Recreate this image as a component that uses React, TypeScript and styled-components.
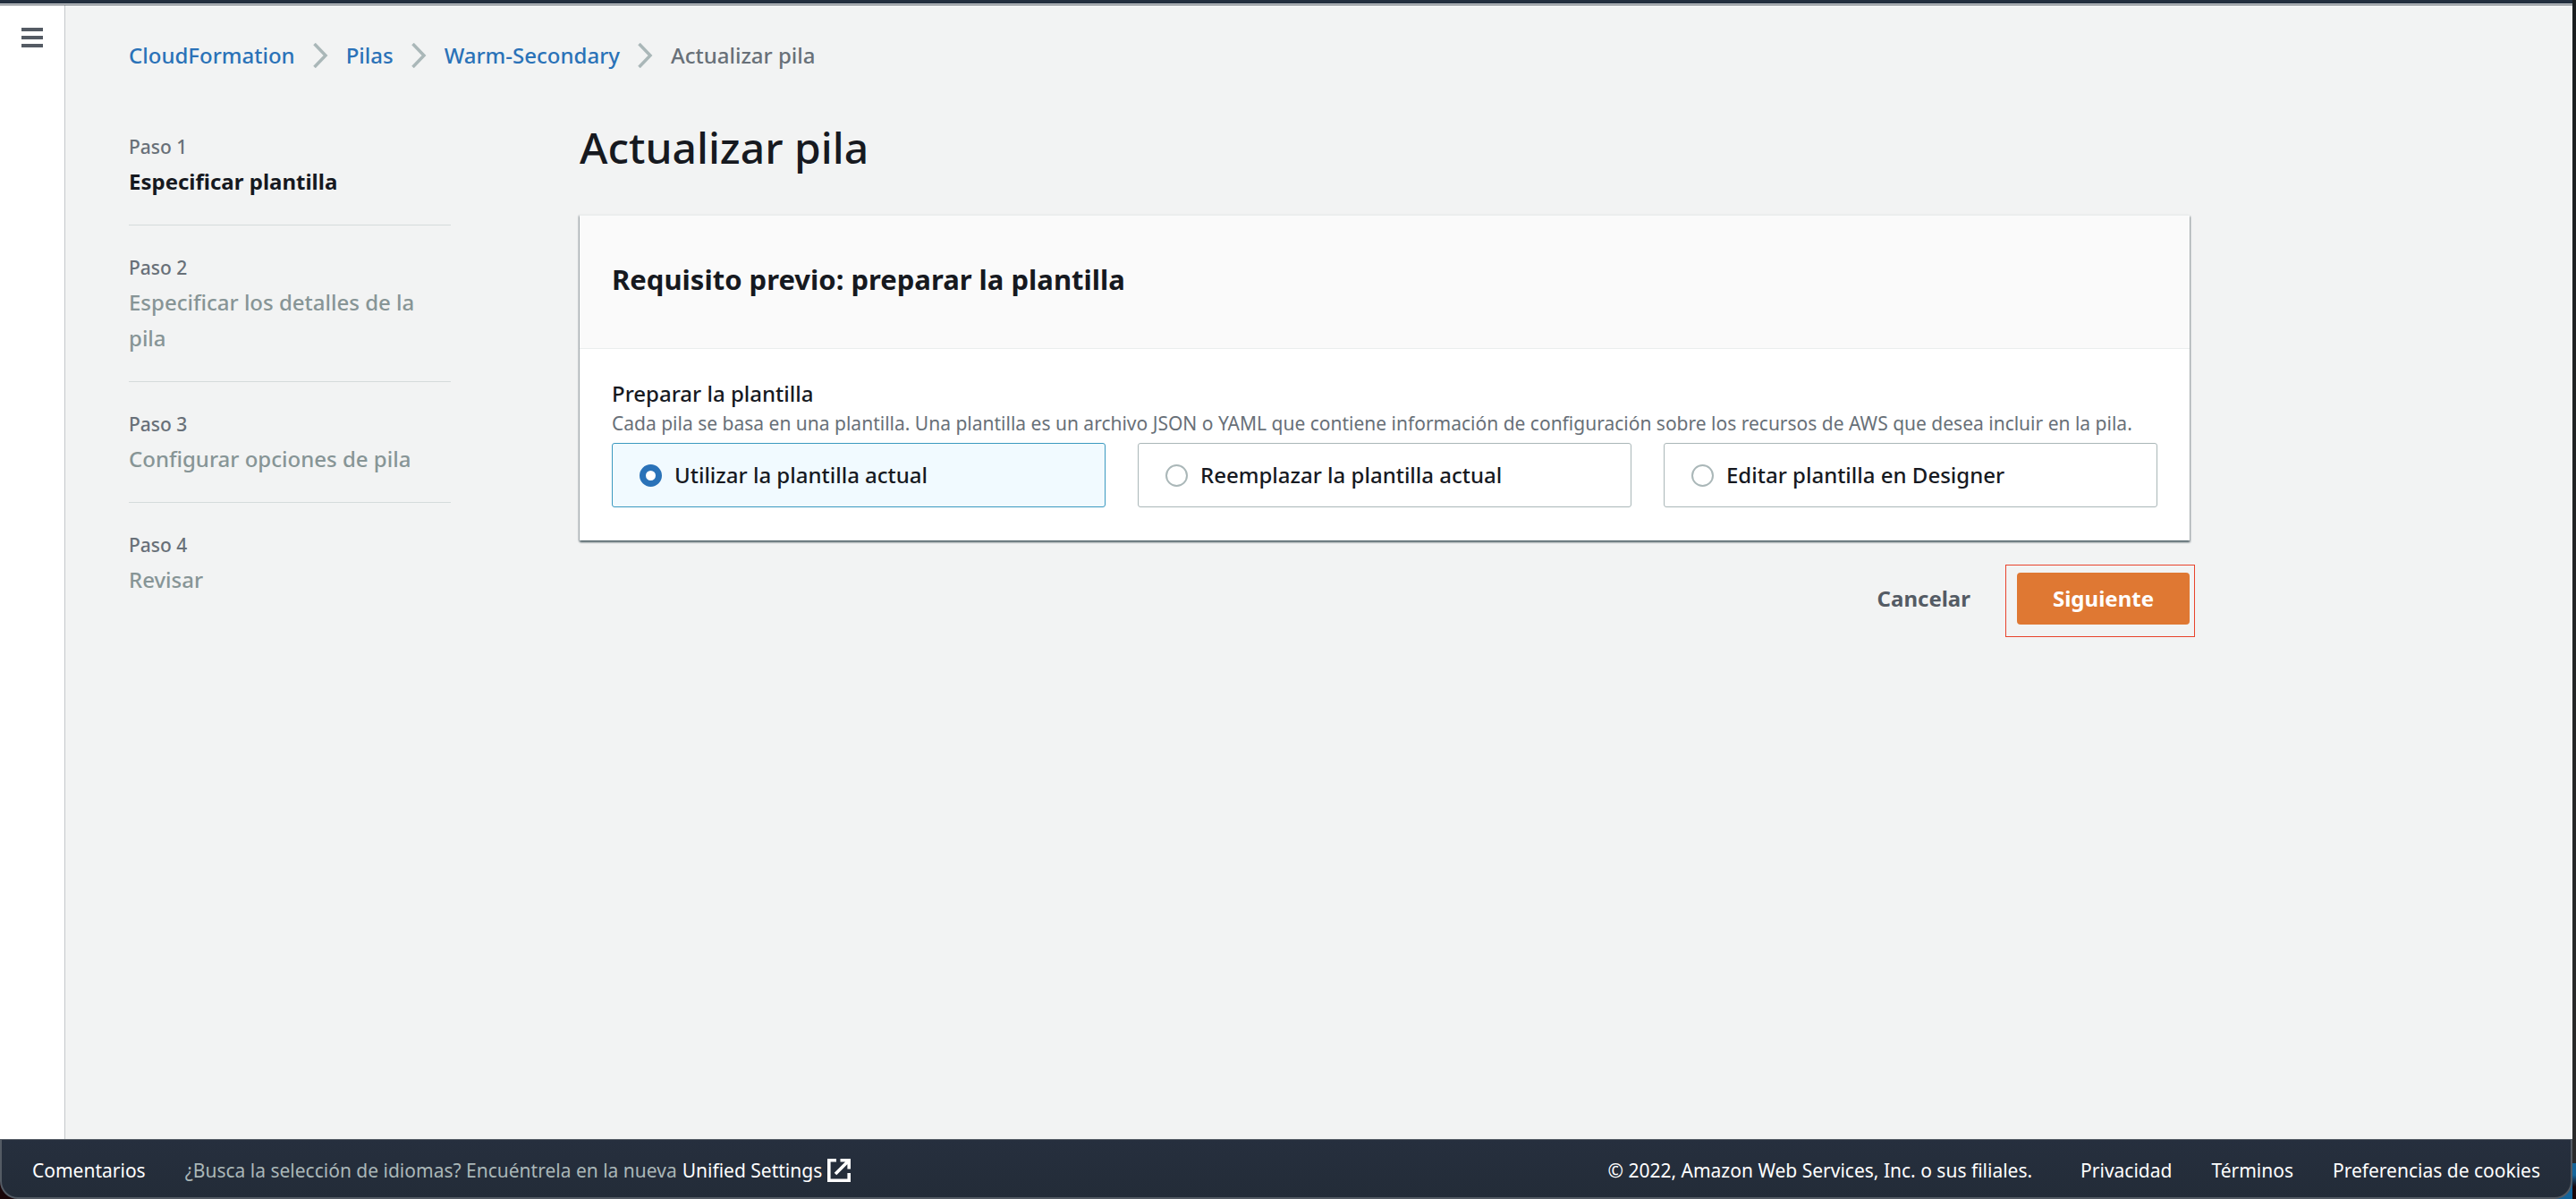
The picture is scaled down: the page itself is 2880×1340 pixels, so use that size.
import React, { useState } from "react";
import styled, { createGlobalStyle } from "styled-components";

const GlobalStyle = createGlobalStyle`
  *, *::before, *::after { box-sizing: border-box; }
  html, body { margin: 0; padding: 0; background: #111414; }
  body {
    font-family: "Noto Sans", "Open Sans", sans-serif;
    font-size: 24px;
    font-weight: 500;
    line-height: 40px;
    color: #16191f;
  }
`;

const Window = styled.div`
  display: flex;
  flex-direction: column;
  min-height: 100vh;
  padding-right: 4px;
  background: linear-gradient(to bottom, #1b1e20 0, #2b2b2b 97%, #14659b 97%, #14659b 98%, #1a0609 99%);
`;

const TopBar = styled.header`
  height: 6px;
  flex: none;
  background: #232f3e;
  border-bottom: 1px solid #545b64;
  box-shadow: inset 0 -1px 0 #ffffff;
`;

const Body = styled.div`
  display: flex;
  flex: 1;
  background: #f2f3f3;
`;

const Rail = styled.nav`
  flex: none;
  width: 73px;
  padding-top: 24px;
  background: #ffffff;
  border-right: 1px solid #c4c8ca;
`;

const MenuButton = styled.button`
  display: block;
  width: 72px;
  height: 24px;
  padding: 0;
  border: 0;
  background: transparent;
  color: #545b64;
  cursor: pointer;
  svg { display: block; margin: 0 auto; }
`;

const Content = styled.div`
  flex: 1;
  min-width: 0;
  padding: 36px 71px;
`;

const Breadcrumbs = styled.ol`
  display: flex;
  align-items: center;
  gap: 20px;
  margin: 0;
  padding: 0;
  list-style: none;
  color: #687078;
`;

const Crumb = styled.li`
  display: flex;
  align-items: center;
  gap: 20px;
  svg { display: block; }
`;

const CrumbLink = styled.a`
  color: #2a72b8;
  text-decoration: none;
`;

const Columns = styled.div`
  display: flex;
  gap: 144px;
  margin-top: 63px;
`;

const Steps = styled.ol`
  flex: none;
  width: 360px;
  margin: 0;
  padding: 0;
  list-style: none;
`;

const Step = styled.li`
  padding: 28px 0;
  border-bottom: 1px solid #d5dbdb;
  &:first-child { padding-top: 0; }
  &:last-child { border-bottom: 0; }
`;

const StepLabel = styled.div`
  font-size: 21px;
  line-height: 38px;
  color: #687078;
`;

const StepTitle = styled.div<{ $active?: boolean }>`
  font-weight: ${(p) => (p.$active ? 700 : 500)};
  color: ${(p) => (p.$active ? "#16191f" : "#879596")};
`;

const Main = styled.main`
  flex: 1;
  min-width: 0;
  max-width: 1800px;
`;

const Title = styled.h1`
  margin: 0 0 55px;
  font-size: 48px;
  line-height: 40px;
  font-weight: 500;
`;

const Card = styled.section`
  background: #ffffff;
  border-top: 1px solid #eaeded;
  box-shadow: 0 2px 2px 0 rgba(0, 28, 36, 0.4), 1px 2px 2px 0 rgba(0, 28, 36, 0.3), -1px 1px 2px 0 rgba(0, 28, 36, 0.3);
`;

const CardHeader = styled.div`
  padding: 50px 36px 56px;
  background: #fafafa;
  border-bottom: 1px solid #eaeded;
`;

const CardTitle = styled.h2`
  margin: 0;
  font-size: 31px;
  line-height: 42px;
  font-weight: 700;
`;

const CardBody = styled.div`
  padding: 32px 36px 37px;
`;

const FieldSet = styled.fieldset`
  margin: 0;
  padding: 0;
  border: 0;
`;

const Legend = styled.legend`
  padding: 0;
  line-height: 35px;
`;

const Hint = styled.p`
  margin: 0 0 6px;
  font-size: 21px;
  font-weight: 400;
  line-height: 32px;
  color: #687078;
`;

const Tiles = styled.div`
  display: grid;
  grid-template-columns: repeat(3, 1fr);
  gap: 36px;
`;

const Tile = styled.label<{ $checked: boolean }>`
  display: flex;
  align-items: center;
  gap: 14px;
  padding: 15px 30px;
  border: 1px solid ${(p) => (p.$checked ? "#3b99c0" : "#aab7b8")};
  border-radius: 3px;
  background: ${(p) => (p.$checked ? "#f1faff" : "#ffffff")};
  cursor: pointer;
`;

const Radio = styled.input`
  appearance: none;
  flex: none;
  width: 25px;
  height: 25px;
  margin: 0;
  border: 2px solid #aab7b8;
  border-radius: 50%;
  background: #ffffff;
  &:checked { border: 7px solid #2a72b8; }
`;

const Actions = styled.div`
  display: flex;
  justify-content: flex-end;
  gap: 12px;
  margin-top: 36px;
`;

const Button = styled.button<{ $primary?: boolean }>`
  display: block;
  height: 58px;
  padding: 0 40px;
  border: 0;
  border-radius: 4px;
  font: inherit;
  font-weight: 700;
  color: ${(p) => (p.$primary ? "#ffffff" : "#545b64")};
  background: ${(p) => (p.$primary ? "#df7833" : "transparent")};
  cursor: pointer;
`;

const Highlight = styled.div`
  position: relative;
  &::after {
    content: "";
    position: absolute;
    inset: -9px -6px -14px -13px;
    border: 1px solid #e8432c;
    pointer-events: none;
  }
`;

const FooterBase = styled.footer`
  display: flex;
  flex: none;
  align-items: center;
  justify-content: space-between;
  height: 67px;
  padding: 4px 34px 0;
  border: 2px solid #545b64;
  border-top-width: 1px;
  border-radius: 0 0 20px 20px;
  background: linear-gradient(#262f3e, #232c38);
  font-size: 21px;
  font-weight: 400;
  line-height: 32px;
  color: #ffffff;
`;

const FooterCorners = styled.div`
  flex: none;
  background: linear-gradient(to right, #1a0609 50%, #14659b 50%);
`;

const FooterGroup = styled.div`
  display: flex;
  align-items: center;
  gap: 44px;
`;

const FooterLink = styled.a`
  display: inline-flex;
  align-items: center;
  gap: 6px;
  color: #ffffff;
  text-decoration: none;
`;

const Notice = styled.span`
  display: inline-flex;
  align-items: center;
  gap: 6px;
  color: #aab7b8;
`;

const Copyright = styled.span`
  margin-right: 10px;
`;

const Chevron = () => (
  <svg width="17" height="28" viewBox="0 0 17 28" fill="none" stroke="#aab7b8" strokeWidth="3.5" aria-hidden="true">
    <path d="M1.5 1 L14 14 L1.5 27" />
  </svg>
);

const MenuIcon = () => (
  <svg width="24" height="24" viewBox="0 0 24 24" stroke="currentColor" strokeWidth="4" aria-hidden="true">
    <path d="M0 3H24M0 12H24M0 21H24" />
  </svg>
);

const ExternalIcon = () => (
  <svg width="26" height="26" viewBox="0 0 26 26" fill="none" stroke="currentColor" strokeWidth="3.6" aria-hidden="true">
    <path d="M10 1.8H1.8V24.2H24.2V16M14.5 1.8H24.2V11.5M24 2L9 17" />
  </svg>
);

const crumbs = ["CloudFormation", "Pilas", "Warm-Secondary"];
const steps = [
  "Especificar plantilla",
  "Especificar los detalles de la pila",
  "Configurar opciones de pila",
  "Revisar",
];
const options = [
  "Utilizar la plantilla actual",
  "Reemplazar la plantilla actual",
  "Editar plantilla en Designer",
];

export default function App() {
  const [selected, setSelected] = useState(0);
  return (
    <>
      <GlobalStyle />
      <Window>
        <TopBar />
        <Body>
          <Rail>
            <MenuButton type="button" aria-label="Menú">
              <MenuIcon />
            </MenuButton>
          </Rail>
          <Content>
            <Breadcrumbs>
              {crumbs.map((name) => (
                <Crumb key={name}>
                  <CrumbLink href="#">{name}</CrumbLink>
                  <Chevron />
                </Crumb>
              ))}
              <Crumb>Actualizar pila</Crumb>
            </Breadcrumbs>
            <Columns>
              <Steps>
                {steps.map((title, i) => (
                  <Step key={title}>
                    <StepLabel>Paso {i + 1}</StepLabel>
                    <StepTitle $active={i === 0}>{title}</StepTitle>
                  </Step>
                ))}
              </Steps>
              <Main>
                <Title>Actualizar pila</Title>
                <Card>
                  <CardHeader>
                    <CardTitle>Requisito previo: preparar la plantilla</CardTitle>
                  </CardHeader>
                  <CardBody>
                    <FieldSet>
                      <Legend>Preparar la plantilla</Legend>
                      <Hint>
                        Cada pila se basa en una plantilla. Una plantilla es un archivo JSON o YAML que contiene
                        información de configuración sobre los recursos de AWS que desea incluir en la pila.
                      </Hint>
                      <Tiles>
                        {options.map((text, i) => (
                          <Tile key={text} $checked={selected === i}>
                            <Radio
                              type="radio"
                              name="template"
                              checked={selected === i}
                              onChange={() => setSelected(i)}
                            />
                            {text}
                          </Tile>
                        ))}
                      </Tiles>
                    </FieldSet>
                  </CardBody>
                </Card>
                <Actions>
                  <Button type="button">Cancelar</Button>
                  <Highlight>
                    <Button type="button" $primary>
                      Siguiente
                    </Button>
                  </Highlight>
                </Actions>
              </Main>
            </Columns>
          </Content>
        </Body>
        <FooterCorners>
          <FooterBase>
            <FooterGroup>
              <FooterLink href="#">Comentarios</FooterLink>
              <Notice>
                ¿Busca la selección de idiomas? Encuéntrela en la nueva
                <FooterLink href="#">
                  Unified Settings
                  <ExternalIcon />
                </FooterLink>
              </Notice>
            </FooterGroup>
            <FooterGroup>
              <Copyright>© 2022, Amazon Web Services, Inc. o sus filiales.</Copyright>
              <FooterLink href="#">Privacidad</FooterLink>
              <FooterLink href="#">Términos</FooterLink>
              <FooterLink href="#">Preferencias de cookies</FooterLink>
            </FooterGroup>
          </FooterBase>
        </FooterCorners>
      </Window>
    </>
  );
}
